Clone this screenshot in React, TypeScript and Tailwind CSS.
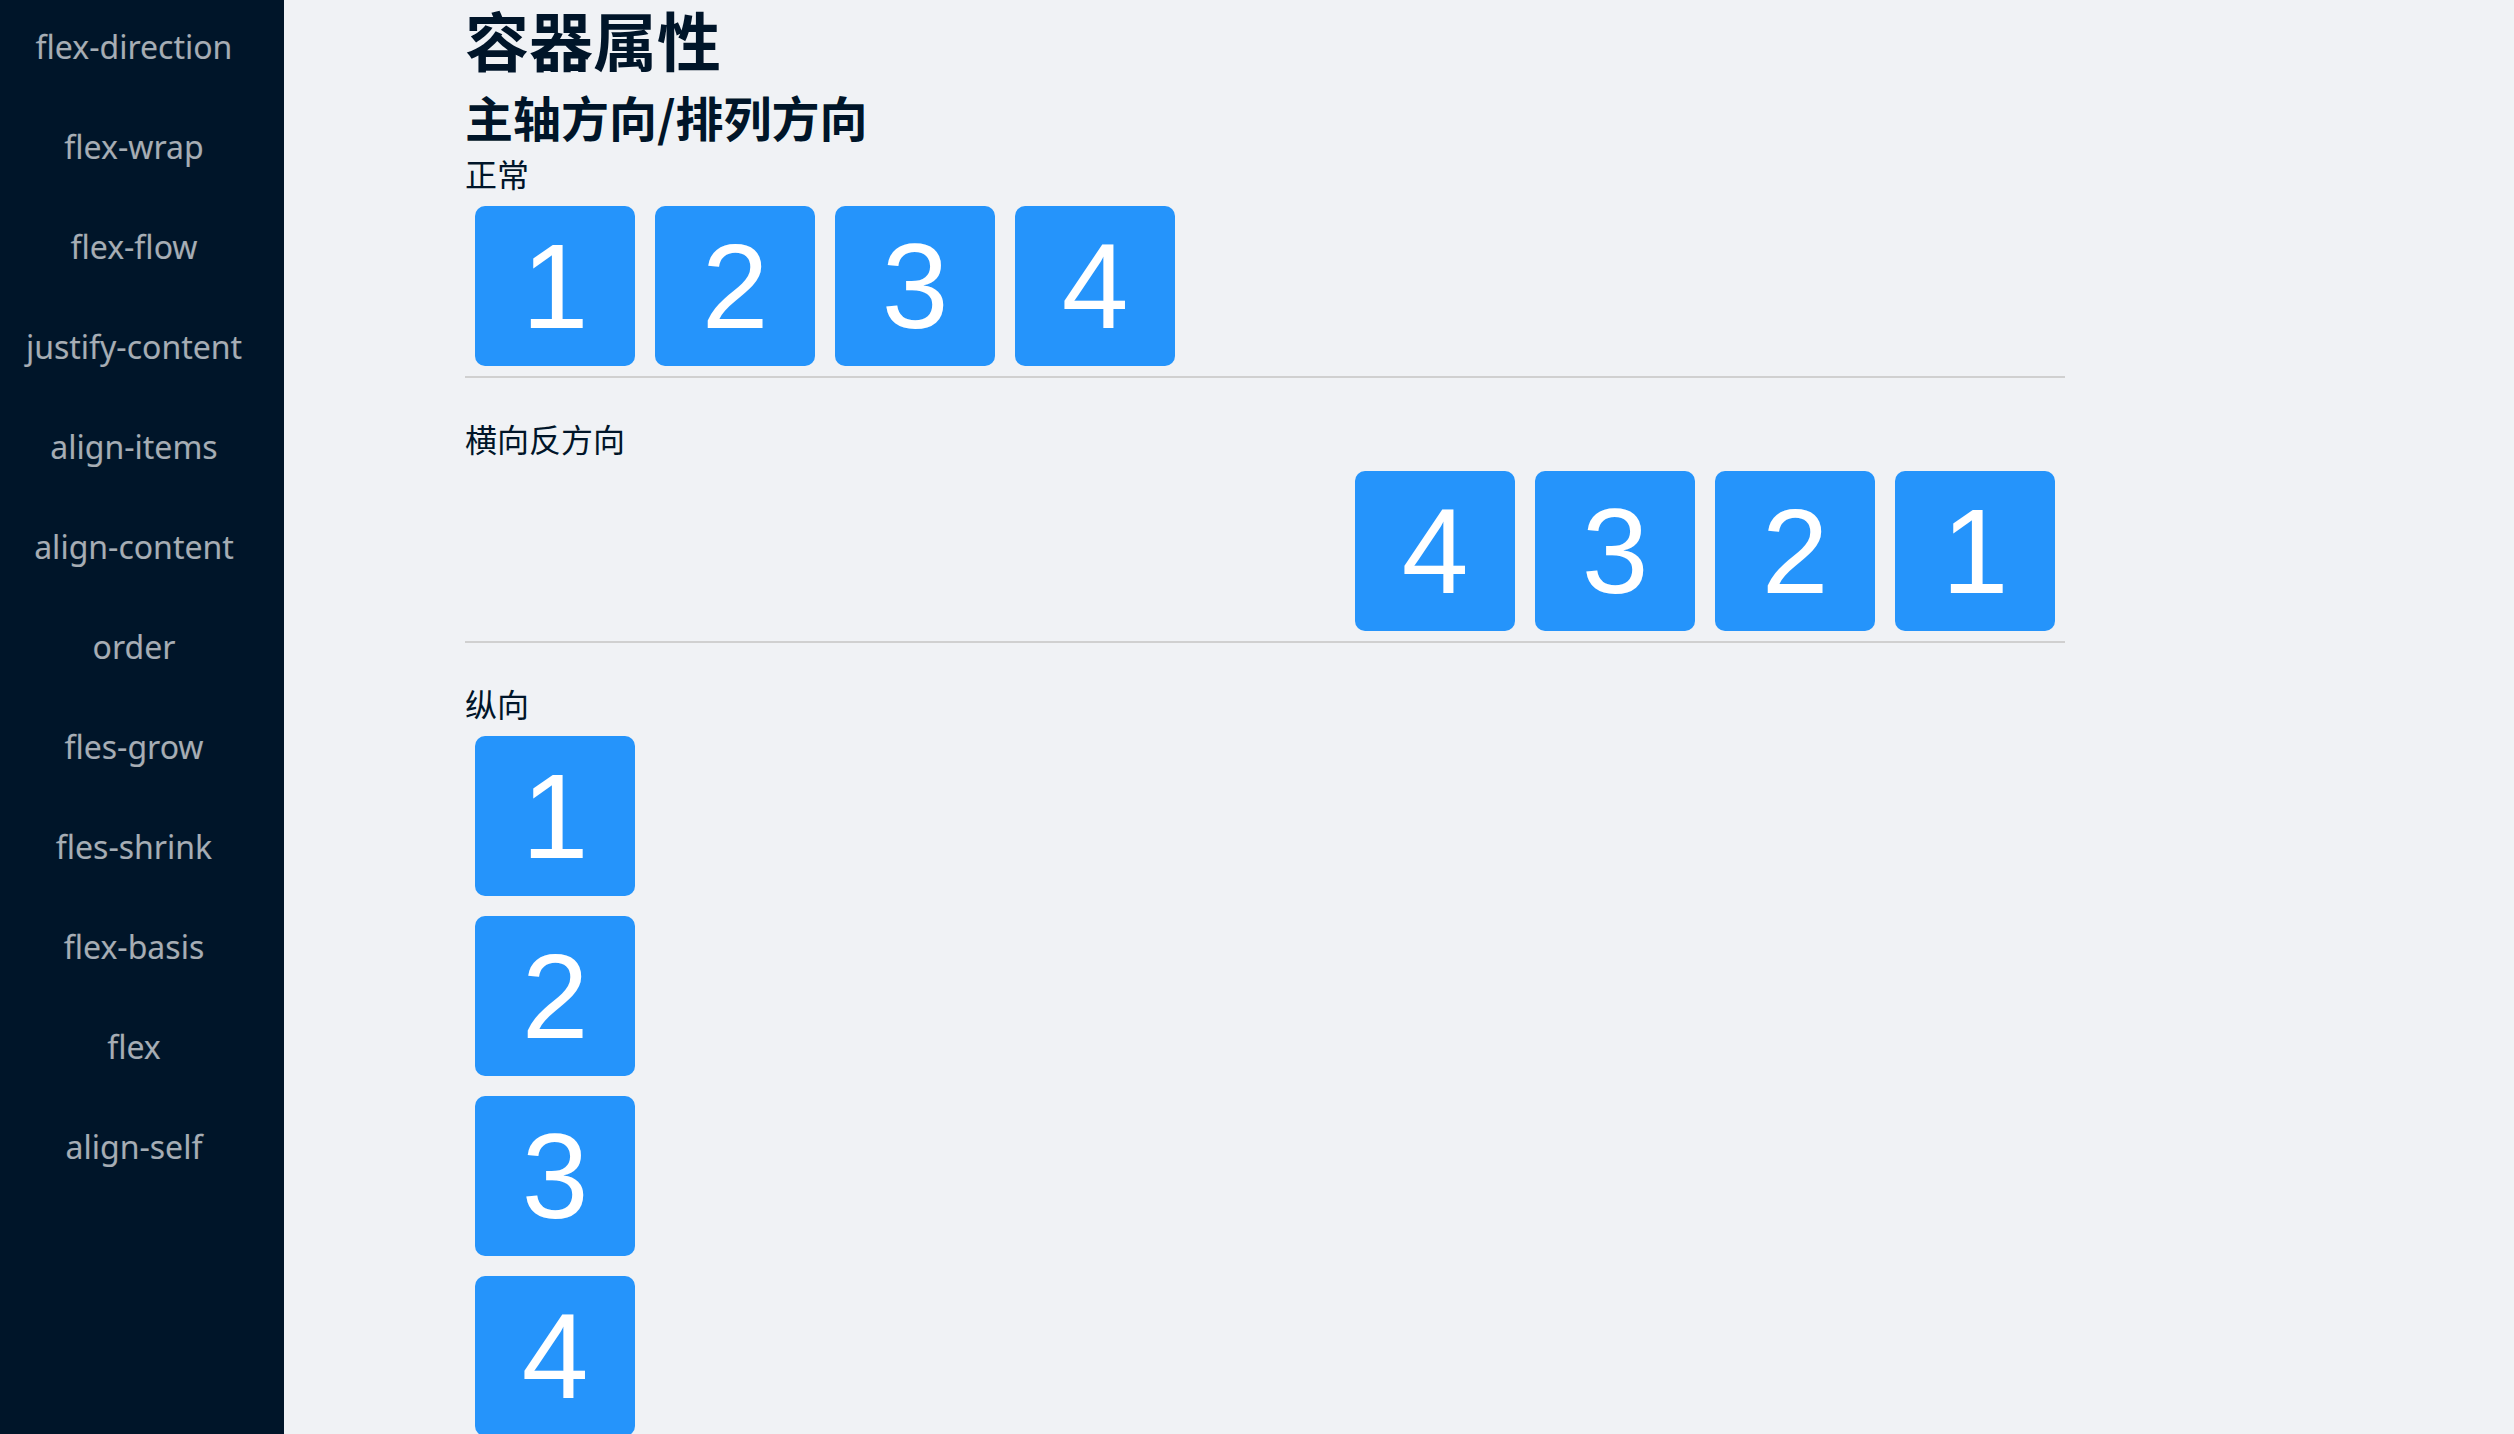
import React from "react"

const menu = [
  "flex-direction",
  "flex-wrap",
  "flex-flow",
  "justify-content",
  "align-items",
  "align-content",
  "order",
  "fles-grow",
  "fles-shrink",
  "flex-basis",
  "flex",
  "align-self",
]

const Box = ({ n }: { n: number }) => (
  <div className="m-[10px] flex h-[160px] w-[160px] shrink-0 items-center justify-center rounded-[10px] bg-[#2594fb] font-['Liberation_Sans',Arial,sans-serif] text-[120px] leading-none text-white">
    {n}
  </div>
)

const Divider = () => <div className="h-[2px] w-full bg-[#d0d0d0]" />

const Label = ({ children, className = "" }: { children: React.ReactNode; className?: string }) => (
  <div className={`text-[32px] leading-none text-[#001529] ${className}`}>{children}</div>
)

export default function App() {
  return (
    <div className="flex h-[1434px] w-full overflow-hidden bg-[#f0f2f5] font-['Noto_Sans','Noto_Sans_CJK_SC',sans-serif]">
      {/* sidebar */}
      <div className="h-full w-[284px] shrink-0 bg-[#001529] pr-[16px]">
        <ul className="-mt-[3px]">
          {menu.map((item) => (
            <li
              key={item}
              className="flex h-[100px] items-center justify-center text-[32px] text-white/65"
            >
              {item}
            </li>
          ))}
        </ul>
      </div>

      {/* content */}
      <div className="pl-[181px]">
        <div className="w-[1600px]">
          <h1 className="mt-[2px] font-['Noto_Sans_CJK_SC',sans-serif] text-[64px] leading-[72px] font-bold text-[#001529]">
            容器属性
          </h1>
          <h2 className="mt-[18px] font-['Noto_Sans_CJK_SC',sans-serif] text-[48px] leading-none font-bold text-[#001529]">
            主轴方向/排列方向
          </h2>

          <Label className="mt-[19px]">正常</Label>
          <div className="mt-[5px] flex">
            {[1, 2, 3, 4].map((n) => (
              <Box key={n} n={n} />
            ))}
          </div>
          <Divider />

          <Label className="mt-[46px]">横向反方向</Label>
          <div className="mt-[5px] flex flex-row-reverse">
            {[1, 2, 3, 4].map((n) => (
              <Box key={n} n={n} />
            ))}
          </div>
          <Divider />

          <Label className="mt-[46px]">纵向</Label>
          <div className="mt-[5px] flex flex-col">
            {[1, 2, 3, 4].map((n) => (
              <Box key={n} n={n} />
            ))}
          </div>
        </div>
      </div>
    </div>
  )
}
